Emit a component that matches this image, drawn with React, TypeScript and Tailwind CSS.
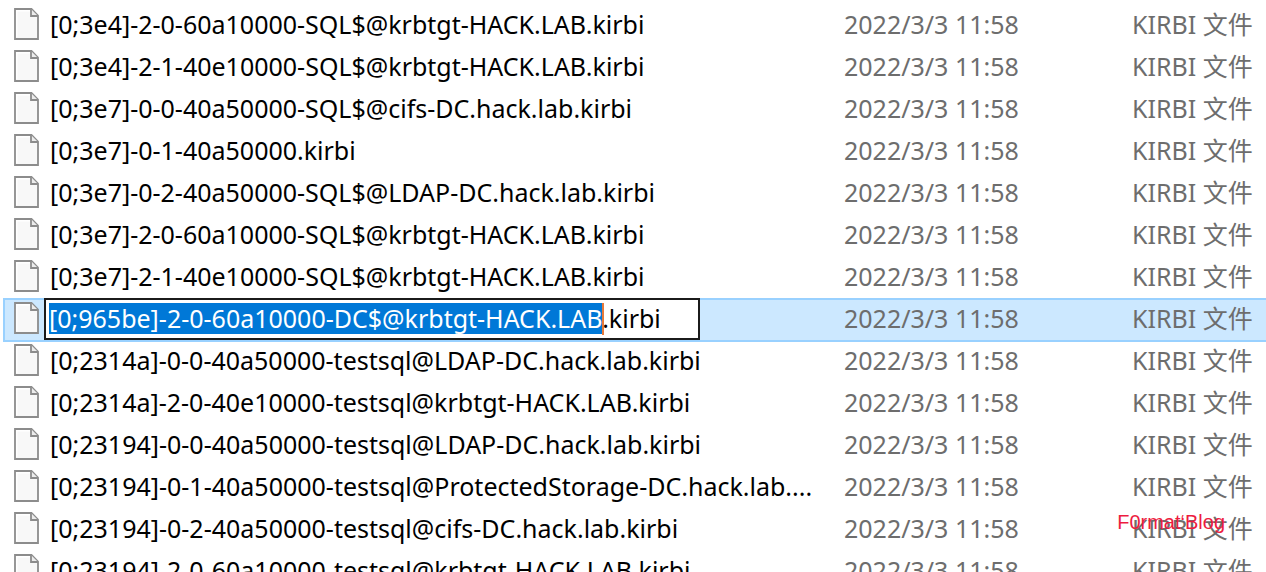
import { useEffect, useRef } from "react"

interface FileEntry {
  name: string;
  renaming?: boolean;
}

const MODIFIED = "2022/3/3 11:58"
const FILE_TYPE = "KIRBI 文件"

const files: FileEntry[] = [
  { name: "[0;3e4]-2-0-60a10000-SQL$@krbtgt-HACK.LAB.kirbi" },
  { name: "[0;3e4]-2-1-40e10000-SQL$@krbtgt-HACK.LAB.kirbi" },
  { name: "[0;3e7]-0-0-40a50000-SQL$@cifs-DC.hack.lab.kirbi" },
  { name: "[0;3e7]-0-1-40a50000.kirbi" },
  { name: "[0;3e7]-0-2-40a50000-SQL$@LDAP-DC.hack.lab.kirbi" },
  { name: "[0;3e7]-2-0-60a10000-SQL$@krbtgt-HACK.LAB.kirbi" },
  { name: "[0;3e7]-2-1-40e10000-SQL$@krbtgt-HACK.LAB.kirbi" },
  { name: "[0;965be]-2-0-60a10000-DC$@krbtgt-HACK.LAB.kirbi", renaming: true },
  { name: "[0;2314a]-0-0-40a50000-testsql@LDAP-DC.hack.lab.kirbi" },
  { name: "[0;2314a]-2-0-40e10000-testsql@krbtgt-HACK.LAB.kirbi" },
  { name: "[0;23194]-0-0-40a50000-testsql@LDAP-DC.hack.lab.kirbi" },
  { name: "[0;23194]-0-1-40a50000-testsql@ProtectedStorage-DC.hack.lab...." },
  { name: "[0;23194]-0-2-40a50000-testsql@cifs-DC.hack.lab.kirbi" },
  { name: "[0;23194]-2-0-60a10000-testsql@krbtgt-HACK.LAB.kirbi" },
]

function FileIcon() {
  return (
    <svg className="h-[34px] w-[25px] shrink-0" viewBox="0 0 25 34" fill="none" aria-hidden="true">
      <path d="M1 1H17.5L24 7.5V31H1Z" fill="#f8f8f8" stroke="#8c8c8c" strokeWidth="1.8" />
      <path d="M2.7 29.3V2.7H16" stroke="#ffffff" strokeWidth="1.4" />
      <path d="M17 1V8H24" fill="#ececec" stroke="#8c8c8c" strokeWidth="1.8" />
    </svg>
  )
}

function RenameBox({ name }: { name: string }) {
  const inputRef = useRef<HTMLInputElement>(null)

  // Select the base name and leave the extension alone
  useEffect(() => {
    inputRef.current?.focus()
    inputRef.current?.setSelectionRange(0, name.lastIndexOf("."))
  }, [name])

  return (
    <div className="relative ml-[5px] w-[656px] border-2 border-[#1b1b1b] bg-white p-[3px]">
      <input
        ref={inputRef}
        aria-label="File name"
        defaultValue={name}
        className="block h-8 w-full bg-transparent pb-0.5 text-black outline-none selection:bg-[#0078d7] selection:text-white"
      />
      <span className="absolute top-[3px] left-[556px] h-8 w-0.5 bg-[#e8793a]" />
    </div>
  )
}

export default function App() {
  return (
    <main className="relative h-screen overflow-hidden bg-white pt-1 pl-[3px] font-['Noto_Sans','Noto_Sans_CJK_SC',sans-serif] text-[25px] leading-8">
      <table className="w-full table-fixed border-collapse whitespace-nowrap">
        <colgroup>
          <col />
          <col className="w-[288px]" />
          <col className="w-[134px]" />
        </colgroup>
        <tbody>
          {files.map((file) => (
            <tr
              key={file.name}
              className={
                file.renaming
                  ? "h-[42px] bg-[#cce8ff] shadow-[inset_0_2px_#99d1ff,inset_2px_0_#99d1ff,0_2px_#99d1ff]"
                  : "h-[42px]"
              }
            >
              <td className="p-0 pl-[11px]">
                <div className="flex items-center">
                  <FileIcon />
                  {file.renaming ? (
                    <RenameBox name={file.name} />
                  ) : (
                    <span className="ml-[11px] pb-0.5 text-black">{file.name}</span>
                  )}
                </div>
              </td>
              <td className="p-0 pb-0.5 text-[#6d6d6d]">{MODIFIED}</td>
              <td className="p-0 pb-0.5 text-[#6d6d6d]">{FILE_TYPE}</td>
            </tr>
          ))}
        </tbody>
      </table>
      <span className="absolute right-[41px] bottom-[38px] font-['Liberation_Sans',sans-serif] text-[20px] leading-6 text-[#ed1c40]">
        F0rmat‘Blog
      </span>
    </main>
  )
}
